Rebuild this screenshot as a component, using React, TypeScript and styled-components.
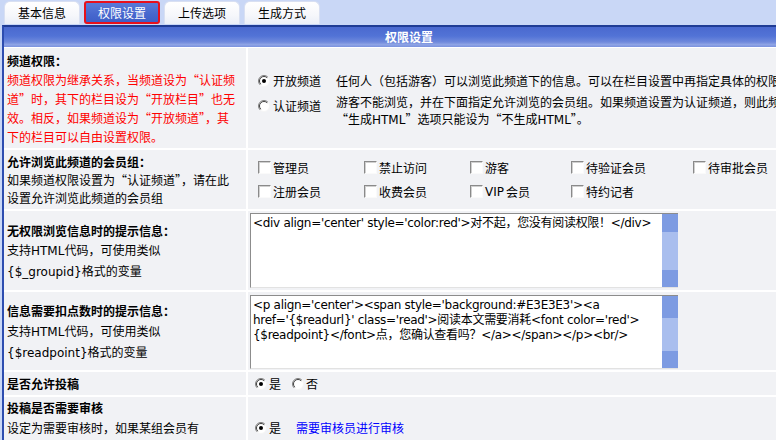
import React from "react";
import styled, { createGlobalStyle } from "styled-components";

const GlobalStyle = createGlobalStyle`
  html, body { margin: 0; padding: 0; background: #C9D7F6; overflow: hidden; }
  body {
    font-family: "Noto Sans CJK SC", "Liberation Sans", sans-serif;
    font-size: 12px;
    color: #000;
  }
`;

const Page = styled.div`
  width: 812px;
  padding-left: 2px;
`;

const TabBar = styled.div`
  display: flex;
  gap: 4px;
  height: 25px;
  padding: 1px 0 0 2px;
  box-sizing: border-box;
`;

const Tab = styled.div<{ $active?: boolean }>`
  width: 76px;
  height: 23px;
  box-sizing: border-box;
  display: flex;
  align-items: center;
  justify-content: center;
  font-size: 12px;
  line-height: 14px;
  border-radius: ${(p) => (p.$active ? "3px" : "6px 6px 0 0")};
  color: ${(p) => (p.$active ? "#fff" : "#000")};
  border: ${(p) => (p.$active ? "2px solid #E8101C" : "1px solid #D9E0F2")};
  border-bottom-width: ${(p) => (p.$active ? "2px" : "0")};
  background: ${(p) =>
    p.$active
      ? "linear-gradient(#5A7AD8, #4767CE 60%, #3E5FC8)"
      : "linear-gradient(#FFFFFF, #F6F7FB 60%, #EBEFF8)"};
`;

const Frame = styled.div`
  border-top: 2px solid #1F3C95;
  border-left: 2px solid #2D4DB0;
  background: #fff;
  display: flex;
  flex-direction: column;
  gap: 2px;
`;

const Header = styled.div`
  height: 20px;
  line-height: 20px;
  text-align: center;
  color: #fff;
  font-weight: bold;
  background: linear-gradient(#4A69CF 0%, #5273D6 45%, #6F89DC 75%, #8FA4E5 88%, #7A92DE 100%);
  margin-bottom: -1px;
`;

const Row = styled.div`
  display: grid;
  grid-template-columns: 242px 1fr;
  column-gap: 2px;
`;

const LabelCell = styled.div<{ $lh: number; $pt?: number; $top?: boolean }>`
  background: #F1F2F5;
  padding: ${(p) => p.$pt ?? 3}px 3px 2px 3px;
  line-height: ${(p) => p.$lh}px;
  display: flex;
  flex-direction: column;
  justify-content: ${(p) => (p.$top ? "flex-start" : "center")};
  white-space: nowrap;
  overflow: hidden;
`;

const Title = styled.div`
  font-weight: bold;
`;

const RedText = styled.div`
  color: #FF0000;
`;

const Latin = styled.span`
  font-family: "DejaVu Sans", "Liberation Sans", sans-serif;
  font-size: 12px;
`;

const ValueCell = styled.div<{ $pad: string; $start?: boolean }>`
  background: #F1F2F5;
  padding: ${(p) => p.$pad};
  display: flex;
  align-items: ${(p) => (p.$start ? "flex-start" : "center")};
  overflow: hidden;
`;

const ChannelGrid = styled.div`
  display: grid;
  grid-template-columns: 78px 452px;
`;

const OptionCell = styled.div<{ $pt?: number }>`
  display: flex;
  align-items: center;
  align-self: ${(p) => (p.$pt ? "start" : "center")};
  gap: 3px;
  line-height: 17px;
  padding-top: ${(p) => p.$pt ?? 2}px;
  padding-bottom: 2px;
  white-space: nowrap;
`;

const Desc = styled.div`
  line-height: 17px;
  padding: 2px 0;
  white-space: nowrap;
`;

const CheckGrid = styled.div`
  display: grid;
  grid-template-columns: 106px 106px 101px 122px 120px;
  grid-auto-rows: 24px;
  align-items: center;
`;

const CheckItem = styled.label`
  display: flex;
  align-items: center;
  gap: 2px;
  white-space: nowrap;
  line-height: 14px;
`;

const CheckBox = styled.span`
  display: inline-block;
  width: 13px;
  height: 13px;
  box-sizing: border-box;
  background: #fff;
  border-top: 1px solid #8A8A8A;
  border-left: 1px solid #8A8A8A;
  border-bottom: 1px solid #FAFAFA;
  border-right: 1px solid #FAFAFA;
  box-shadow: inset 1px 1px 0 #D0D0D0;
`;

const RadioItem = styled.label<{ $gapAfter?: number }>`
  display: inline-flex;
  align-items: center;
  gap: 2px;
  line-height: 17px;
  margin-right: ${(p) => p.$gapAfter ?? 0}px;
  white-space: nowrap;
`;

const RadioMark = styled.span`
  display: inline-flex;
  width: 12px;
  height: 12px;
`;

const Inline = styled.div`
  display: flex;
  align-items: center;
`;

const Link = styled.a`
  color: #0000FF;
  text-decoration: none;
  white-space: nowrap;
`;

const BoxWrap = styled.div<{ $h: number }>`
  display: flex;
  width: 428px;
  height: ${(p) => p.$h}px;
  box-sizing: border-box;
  border-top: 1px solid #8C8C8C;
  border-left: 1px solid #8C8C8C;
  border-bottom: 1px solid #E2E2E2;
  background: #fff;
`;

const Area = styled.textarea`
  flex: 1;
  border: 0;
  margin: 0;
  padding: 2px 2px;
  resize: none;
  overflow: hidden;
  outline: none;
  background: #fff;
  color: #000;
  font-family: "DejaVu Sans", "Noto Sans CJK SC", sans-serif;
  font-size: 12px;
  line-height: 15px;
  letter-spacing: -0.3px;
  white-space: pre;
`;

const Scroll = styled.div`
  width: 16px;
  display: flex;
  flex-direction: column;
  justify-content: space-between;
  background: #A9BEEE;
`;

const ScrollBtn = styled.div<{ $h: number }>`
  height: ${(p) => p.$h}px;
  background: #7D9BE2;
`;

const Radio = ({ checked }: { checked?: boolean }) => (
  <RadioMark>
    <svg width="12" height="12" viewBox="0 0 12 12">
      <circle cx="6" cy="6" r="5.5" fill="#fff" />
      <path d="M9.9 2.1 A5.5 5.5 0 0 1 2.1 9.9" fill="none" stroke="#F4F4F4" />
      <path d="M2.1 9.9 A5.5 5.5 0 0 1 9.9 2.1" fill="none" stroke="#808080" />
      <path d="M2.8 9.2 A4.5 4.5 0 0 1 9.2 2.8" fill="none" stroke="#404040" />
      {checked && <circle cx="6" cy="6" r="2" fill="#000" />}
    </svg>
  </RadioMark>
);

const TextBox = ({ h, top, bottom, value }: { h: number; top: number; bottom: number; value: string }) => (
  <BoxWrap $h={h}>
    <Area readOnly wrap="off" value={value} />
    <Scroll>
      <ScrollBtn $h={top} />
      <ScrollBtn $h={bottom} />
    </Scroll>
  </BoxWrap>
);

const tabs = ["基本信息", "权限设置", "上传选项", "生成方式"];
const groups: React.ReactNode[] = [
  "管理员",
  "禁止访问",
  "游客",
  "待验证会员",
  "待审批会员",
  "注册会员",
  "收费会员",
  <>
    <Latin>VIP</Latin>会员
  </>,
  "特约记者",
];

export default function App() {
  return (
    <>
      <GlobalStyle />
      <Page>
        <TabBar>
          {tabs.map((t, i) => (
            <Tab key={t} $active={i === 1}>
              {t}
            </Tab>
          ))}
        </TabBar>
        <Frame>
          <Header>权限设置</Header>

          <Row>
            <LabelCell $lh={19}>
              <Title>频道权限：</Title>
              <RedText>频道权限为继承关系，当频道设为“认证频</RedText>
              <RedText>道”时，其下的栏目设为“开放栏目”也无</RedText>
              <RedText>效。相反，如果频道设为“开放频道”，其</RedText>
              <RedText>下的栏目可以自由设置权限。</RedText>
            </LabelCell>
            <ValueCell $pad="5px 0 0 10px">
              <ChannelGrid>
                <OptionCell>
                  <Radio checked />
                  开放频道
                </OptionCell>
                <Desc>任何人（包括游客）可以浏览此频道下的信息。可以在栏目设置中再指定具体的权限。</Desc>
                <OptionCell $pt={6}>
                  <Radio />
                  认证频道
                </OptionCell>
                <Desc>
                  游客不能浏览，并在下面指定允许浏览的会员组。如果频道设置为认证频道，则此频道的
                  <br />
                  “生成<Latin>HTML</Latin>”选项只能设为“不生成<Latin>HTML</Latin>”。
                </Desc>
              </ChannelGrid>
            </ValueCell>
          </Row>

          <Row>
            <LabelCell $lh={18}>
              <Title>允许浏览此频道的会员组：</Title>
              <div>如果频道权限设置为“认证频道”，请在此</div>
              <div>设置允许浏览此频道的会员组</div>
            </LabelCell>
            <ValueCell $pad="0 0 0 10px">
              <CheckGrid>
                {groups.map((g, i) => (
                  <CheckItem key={i}>
                    <CheckBox />
                    {g}
                  </CheckItem>
                ))}
              </CheckGrid>
            </ValueCell>
          </Row>

          <Row>
            <LabelCell $lh={19}>
              <Title>无权限浏览信息时的提示信息：</Title>
              <div>
                支持<Latin>HTML</Latin>代码，可使用类似
              </div>
              <div>
                <Latin>{"{$_groupid}"}</Latin>格式的变量
              </div>
            </LabelCell>
            <ValueCell $pad="2px 0 2px 2px">
              <TextBox
                h={75}
                top={18}
                bottom={17}
                value={"<div align='center' style='color:red'>对不起，您没有阅读权限！</div>"}
              />
            </ValueCell>
          </Row>

          <Row>
            <LabelCell $lh={20}>
              <Title>信息需要扣点数时的提示信息：</Title>
              <div>
                支持<Latin>HTML</Latin>代码，可使用类似
              </div>
              <div>
                <Latin>{"{$readpoint}"}</Latin>格式的变量
              </div>
            </LabelCell>
            <ValueCell $pad="3px 0 1px 2px">
              <TextBox
                h={74}
                top={22}
                bottom={17}
                value={
                  "<p align='center'><span style='background:#E3E3E3'><a\nhref='{$readurl}' class='read'>阅读本文需要消耗<font color='red'>\n{$readpoint}</font>点，您确认查看吗？</a></span></p><br/>"
                }
              />
            </ValueCell>
          </Row>

          <Row>
            <LabelCell $lh={19} $pt={2}>
              <Title>是否允许投稿</Title>
            </LabelCell>
            <ValueCell $pad="0 0 0 7px">
              <Inline>
                <RadioItem $gapAfter={11}>
                  <Radio checked />是
                </RadioItem>
                <RadioItem>
                  <Radio />否
                </RadioItem>
              </Inline>
            </ValueCell>
          </Row>

          <Row>
            <LabelCell $lh={20} $pt={1} $top>
              <Title>投稿是否需要审核</Title>
              <div>设定为需要审核时，如果某组会员有</div>
            </LabelCell>
            <ValueCell $pad="22px 0 6px 7px" $start>
              <Inline>
                <RadioItem $gapAfter={15}>
                  <Radio checked />是
                </RadioItem>
                <Link>需要审核员进行审核</Link>
              </Inline>
            </ValueCell>
          </Row>
        </Frame>
      </Page>
    </>
  );
}
